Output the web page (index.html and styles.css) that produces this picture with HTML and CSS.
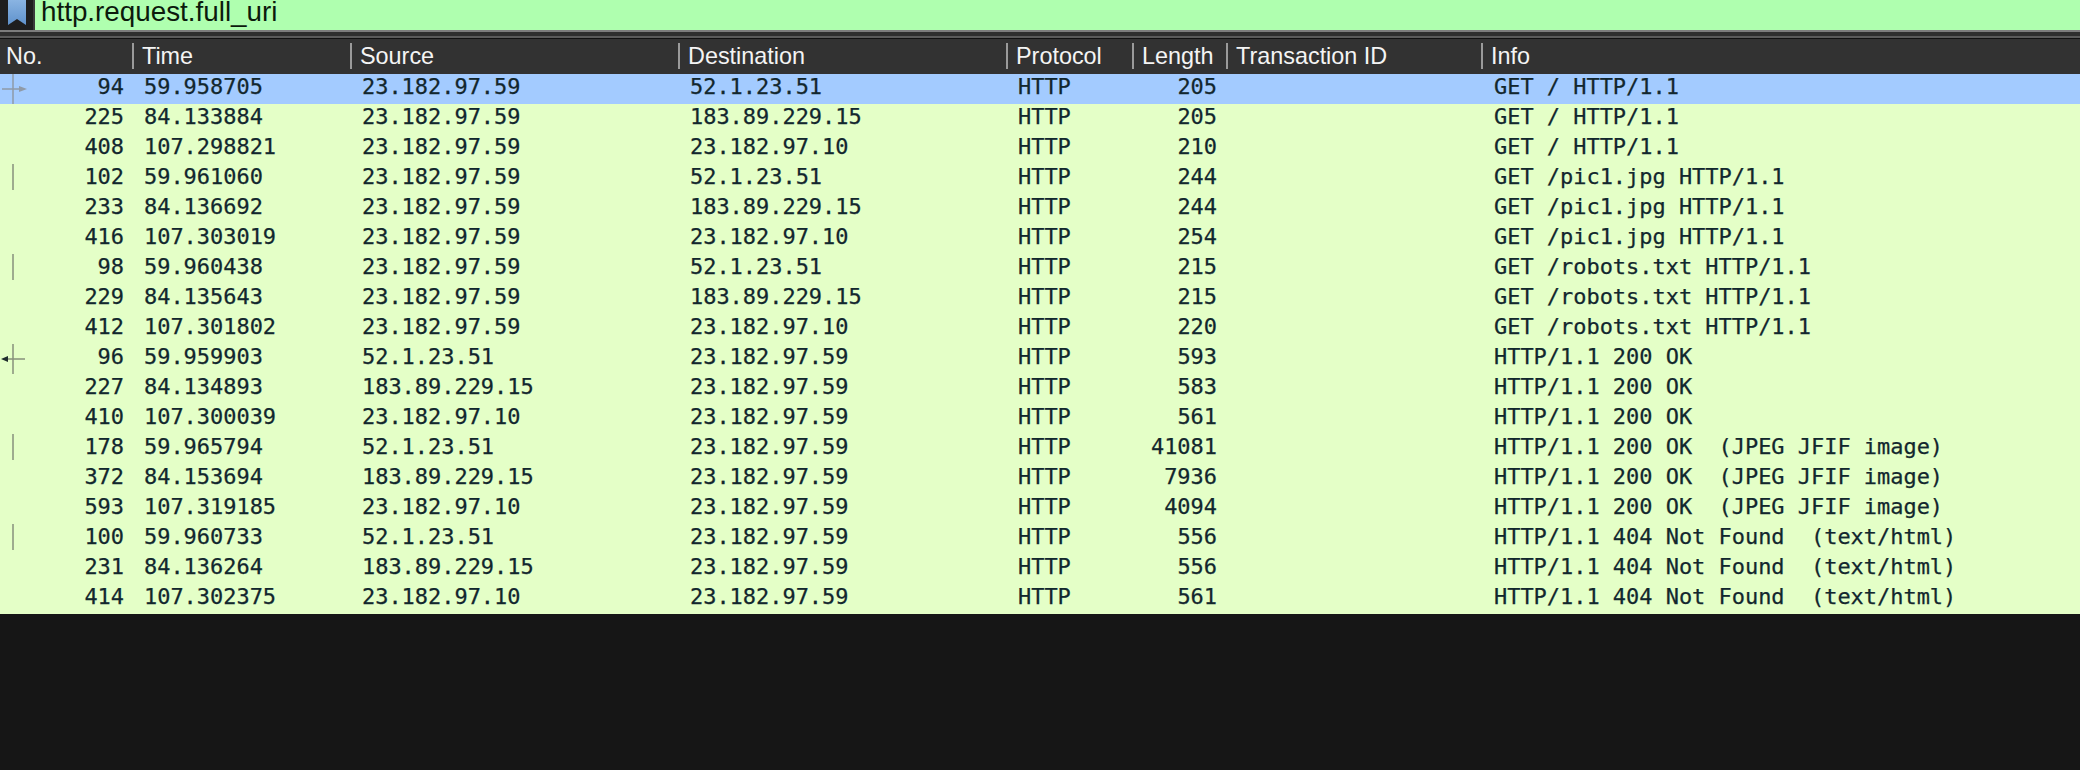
FILE: index.html
```html
<!DOCTYPE html>
<html lang="en">
<head>
<meta charset="UTF-8">
<title>Wireshark packet list</title>
<link rel="stylesheet" href="styles.css">
</head>
<body>

<!-- Display filter bar -->
<div class="filter-bar">
    <div class="bookmark-btn">
        <svg width="18" height="26" viewBox="0 0 18 26"><defs><linearGradient id="ribbon" x1="0" y1="0" x2="0" y2="1"><stop offset="0" stop-color="#8ab4e2"/><stop offset="1" stop-color="#5f92cc"/></linearGradient></defs><path d="M0 0H18V25L9 19L0 25Z" fill="url(#ribbon)"/></svg>
    </div>
    <div class="filter-input">http.request.full_uri</div>
</div>
<div class="filter-rule"></div>

<table class="packets">
    <colgroup>
        <col class="c-no"><col class="c-time"><col class="c-addr"><col class="c-addr">
        <col class="c-proto"><col class="c-len"><col class="c-txid"><col>
    </colgroup>
    <thead>
        <tr>
            <th>No.</th><th>Time</th><th>Source</th><th>Destination</th>
            <th>Protocol</th><th>Length</th><th>Transaction ID</th><th>Info</th>
        </tr>
    </thead>
    <tbody>
        <tr class="selected">
            <td class="num"><svg class="rel" width="30" height="30" viewBox="0 0 30 30"><path d="M13 0V30M2 15H20" stroke="#8f9aa8" stroke-width="1.5" fill="none"/><path d="M19 12L27 15L19 18Z" fill="#8f9aa8"/></svg>94</td>
            <td>59.958705</td><td>23.182.97.59</td><td>52.1.23.51</td><td>HTTP</td><td class="num">205</td><td></td><td>GET / HTTP/1.1</td>
        </tr>
        <tr><td class="num">225</td><td>84.133884</td><td>23.182.97.59</td><td>183.89.229.15</td><td>HTTP</td><td class="num">205</td><td></td><td>GET / HTTP/1.1</td></tr>
        <tr><td class="num">408</td><td>107.298821</td><td>23.182.97.59</td><td>23.182.97.10</td><td>HTTP</td><td class="num">210</td><td></td><td>GET / HTTP/1.1</td></tr>
        <tr><td class="num"><svg class="rel" width="30" height="30" viewBox="0 0 30 30"><path d="M13 0V26" stroke="#87917c" stroke-width="1.5"/></svg>102</td><td>59.961060</td><td>23.182.97.59</td><td>52.1.23.51</td><td>HTTP</td><td class="num">244</td><td></td><td>GET /pic1.jpg HTTP/1.1</td></tr>
        <tr><td class="num">233</td><td>84.136692</td><td>23.182.97.59</td><td>183.89.229.15</td><td>HTTP</td><td class="num">244</td><td></td><td>GET /pic1.jpg HTTP/1.1</td></tr>
        <tr><td class="num">416</td><td>107.303019</td><td>23.182.97.59</td><td>23.182.97.10</td><td>HTTP</td><td class="num">254</td><td></td><td>GET /pic1.jpg HTTP/1.1</td></tr>
        <tr><td class="num"><svg class="rel" width="30" height="30" viewBox="0 0 30 30"><path d="M13 0V26" stroke="#87917c" stroke-width="1.5"/></svg>98</td><td>59.960438</td><td>23.182.97.59</td><td>52.1.23.51</td><td>HTTP</td><td class="num">215</td><td></td><td>GET /robots.txt HTTP/1.1</td></tr>
        <tr><td class="num">229</td><td>84.135643</td><td>23.182.97.59</td><td>183.89.229.15</td><td>HTTP</td><td class="num">215</td><td></td><td>GET /robots.txt HTTP/1.1</td></tr>
        <tr><td class="num">412</td><td>107.301802</td><td>23.182.97.59</td><td>23.182.97.10</td><td>HTTP</td><td class="num">220</td><td></td><td>GET /robots.txt HTTP/1.1</td></tr>
        <tr><td class="num"><svg class="rel" width="30" height="30" viewBox="0 0 30 30"><path d="M13 0V30M6 15H25" stroke="#87917c" stroke-width="1.5" fill="none"/><path d="M1 15L8 12V18Z" fill="#1f2d2d"/></svg>96</td><td>59.959903</td><td>52.1.23.51</td><td>23.182.97.59</td><td>HTTP</td><td class="num">593</td><td></td><td>HTTP/1.1 200 OK</td></tr>
        <tr><td class="num">227</td><td>84.134893</td><td>183.89.229.15</td><td>23.182.97.59</td><td>HTTP</td><td class="num">583</td><td></td><td>HTTP/1.1 200 OK</td></tr>
        <tr><td class="num">410</td><td>107.300039</td><td>23.182.97.10</td><td>23.182.97.59</td><td>HTTP</td><td class="num">561</td><td></td><td>HTTP/1.1 200 OK</td></tr>
        <tr><td class="num"><svg class="rel" width="30" height="30" viewBox="0 0 30 30"><path d="M13 0V26" stroke="#87917c" stroke-width="1.5"/></svg>178</td><td>59.965794</td><td>52.1.23.51</td><td>23.182.97.59</td><td>HTTP</td><td class="num">41081</td><td></td><td>HTTP/1.1 200 OK  (JPEG JFIF image)</td></tr>
        <tr><td class="num">372</td><td>84.153694</td><td>183.89.229.15</td><td>23.182.97.59</td><td>HTTP</td><td class="num">7936</td><td></td><td>HTTP/1.1 200 OK  (JPEG JFIF image)</td></tr>
        <tr><td class="num">593</td><td>107.319185</td><td>23.182.97.10</td><td>23.182.97.59</td><td>HTTP</td><td class="num">4094</td><td></td><td>HTTP/1.1 200 OK  (JPEG JFIF image)</td></tr>
        <tr><td class="num"><svg class="rel" width="30" height="30" viewBox="0 0 30 30"><path d="M13 0V26" stroke="#87917c" stroke-width="1.5"/></svg>100</td><td>59.960733</td><td>52.1.23.51</td><td>23.182.97.59</td><td>HTTP</td><td class="num">556</td><td></td><td>HTTP/1.1 404 Not Found  (text/html)</td></tr>
        <tr><td class="num">231</td><td>84.136264</td><td>183.89.229.15</td><td>23.182.97.59</td><td>HTTP</td><td class="num">556</td><td></td><td>HTTP/1.1 404 Not Found  (text/html)</td></tr>
        <tr><td class="num">414</td><td>107.302375</td><td>23.182.97.10</td><td>23.182.97.59</td><td>HTTP</td><td class="num">561</td><td></td><td>HTTP/1.1 404 Not Found  (text/html)</td></tr>
    </tbody>
</table>

</body>
</html>
```

FILE: styles.css
```css
* {
    margin: 0;
    padding: 0;
    box-sizing: border-box;
}

html, body {
    height: 100%;
    overflow: hidden;
}

body {
    background: #161616;
    font-family: 'Liberation Sans', Arial, sans-serif;
}

.filter-bar {
    display: flex;
    height: 30px;
    background: #1e1e1e;
}

.bookmark-btn {
    width: 35px;
    padding-left: 8px;
    border-right: 2px solid #3a3a3a;
    border-bottom-left-radius: 5px;
    overflow: hidden;
}

.filter-input {
    flex: 1;
    padding-left: 6px;
    background: #afffaf;
    color: #0c1a0c;
    font-size: 27.8px;
    line-height: 24px;
}

.filter-rule {
    height: 9px;
    border-top: 2px solid #7c7c7c;
    border-bottom: 1px solid #111;
    background: linear-gradient(#2e2e2e 0 4px, #5a5a5a 4px);
}

.packets {
    width: 100%;
    border-collapse: collapse;
    table-layout: fixed;
}

.c-no { width: 133px; }
.c-time { width: 218px; }
.c-addr { width: 328px; }
.c-proto { width: 126px; }
.c-len { width: 94px; }
.c-txid { width: 255px; }

th {
    position: relative;
    height: 35px;
    padding: 0 0 1px 9px;
    background: #323232;
    color: #f4f4f4;
    font-size: 23.4px;
    font-weight: 400;
    text-align: left;
}

th:first-child {
    padding-left: 6px;
}

th + th::before {
    content: "";
    position: absolute;
    left: -1px;
    top: 4px;
    height: 26px;
    width: 2px;
    background: #9a9a9a;
}

td {
    height: 30px;
    padding: 0 0 0 11px;
    background: #e4ffc7;
    color: #12272e;
    font-family: 'DejaVu Sans Mono', monospace;
    font-size: 21.95px;
    line-height: 26px;
    -webkit-text-stroke: 0.25px #12272e;
    white-space: pre;
    overflow: hidden;
    vertical-align: top;
}

td:last-child {
    padding-left: 12px;
}

td.num {
    position: relative;
    padding: 0 10px 0 0;
    text-align: right;
}

td:first-child.num {
    padding-right: 9px;
}

.selected td {
    background: #a3cbff;
}

.rel {
    position: absolute;
    left: 0;
    top: 0;
}
```
